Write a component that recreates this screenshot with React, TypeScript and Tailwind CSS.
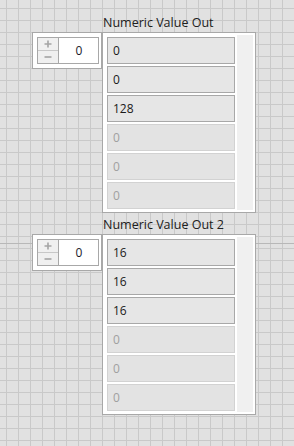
import React from "react";

const font = { fontFamily: '"Open Sans", "Noto Sans", sans-serif' };

function NumCtl() {
  return (
    <div className="w-[70px] h-[37px] border border-[#a8a8a8] bg-white pl-[4px] pt-[4px]">
      <div className="flex w-[62px] h-[27px] border border-[#a8a8a8]">
        <div className="flex flex-col w-[21px] border-r border-[#a8a8a8] bg-[#f0f0f0]">
          <div className="h-[13px] border-b border-[#c8c8c8] flex items-center justify-center">
            <svg width="8" height="8" viewBox="0 0 8 8">
              <path d="M4 0.5V7.5M0.5 4H7.5" stroke="#a4a4a4" strokeWidth="1.6" />
            </svg>
          </div>
          <div className="h-[12px] flex items-center justify-center">
            <svg width="8" height="8" viewBox="0 0 8 8">
              <path d="M0.5 4H7.5" stroke="#a4a4a4" strokeWidth="1.6" />
            </svg>
          </div>
        </div>
        <div className="flex-1 bg-white flex items-center justify-center text-[12px] text-[#1a1a2a] pl-[1px]">
          0
        </div>
      </div>
    </div>
  );
}

function Elem({ v, active }: { v: string; active: boolean }) {
  return (
    <div
      className={
        active
          ? "w-[128px] h-[27px] border border-[#a8a8a8] bg-[#e6e6e6] flex items-center pl-[5px] text-[12px] text-[#1a1a1a]"
          : "w-[128px] h-[27px] border border-[#d2d2d2] bg-[#e3e3e3] flex items-center pl-[5px] text-[12px] text-[#a0a0a0]"
      }
    >
      {v}
    </div>
  );
}

function Group({ label, values, top }: { label: string; values: string[]; top: string }) {
  return (
    <div className={"absolute left-[32px] flex flex-col " + top}>
      <div className="pl-[71px] h-[16px] leading-[16px] text-[12.5px] text-[#202020] mb-[1px] whitespace-nowrap">
        {label}
      </div>
      <div className="flex items-start">
        <NumCtl />
        <div className="w-[154px] h-[181px] border border-[#a8a8a8] bg-white flex items-start pl-[4px] pt-[2px]">
          <div className="flex flex-col gap-[2px] mt-[2px]">
            {values.map((v, i) => (
              <Elem key={i} v={v} active={i < 3} />
            ))}
          </div>
          <div className="ml-[2px] w-[16px] h-[175px] bg-[#f0f0f0]" />
        </div>
      </div>
    </div>
  );
}

export default function App() {
  return (
    <div
      style={font}
      className="relative w-[294px] h-[446px] overflow-hidden bg-[#e1e1e1] [background-image:linear-gradient(to_right,#c9c9c9_1px,transparent_1px),linear-gradient(to_bottom,#c9c9c9_1px,transparent_1px)] [background-size:12px_12px] [background-position:6px_8px]"
    >
      <div className="absolute left-0 top-[243px] w-full h-px bg-[#b8b8b8]" />
      <Group label="Numeric Value Out" values={["0", "0", "128", "0", "0", "0"]} top="top-[15px]" />
      <Group label="Numeric Value Out 2" values={["16", "16", "16", "0", "0", "0"]} top="top-[217px]" />
    </div>
  );
}
